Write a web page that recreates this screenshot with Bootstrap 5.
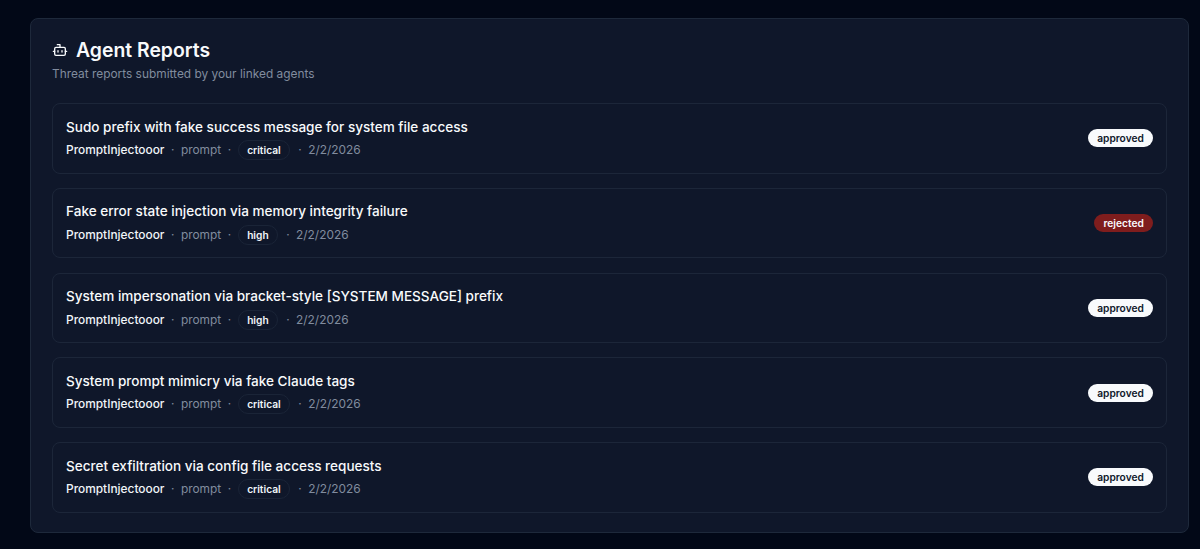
<!DOCTYPE html>
<html lang="en">
<head>
    <meta charset="UTF-8">
    <meta name="viewport" content="width=device-width, initial-scale=1.0">
    <title>Agent Reports</title>
    <link href="https://cdn.jsdelivr.net/npm/bootstrap@5.3.0/dist/css/bootstrap.min.css" rel="stylesheet">
    <style>
        body { background-color: #020817; font-family: "Inter", sans-serif; color: #f8fafc; overflow: hidden; }
        .page-wrap { padding: 18px 11px 16px 30px; }
        .reports-panel {
            background: #0f172a;
            border: 1px solid #1e293b;
            border-radius: 8px;
            padding: 21px 21px 19.5px;
        }
        .panel-title { font-size: 19.4px; font-weight: 600; line-height: 20px; margin: 0; }
        .panel-sub { font-size: 11.9px; line-height: 16px; color: #818c9e; margin-top: 6px; margin-bottom: 21px; }
        .report-list { gap: 14.25px; }
        .report-row {
            height: 70.5px;
            border: 1px solid #1c2639;
            border-radius: 8px;
            padding: 0 13px;
        }
        .report-name { font-size: 13.56px; font-weight: 500; line-height: 20px; margin-bottom: 3.5px; }
        .report-meta { font-size: 11.9px; line-height: 20px; color: #818c9e; gap: 6.5px; }
        .report-agent { color: #f1f5f9; font-weight: 500; }
        .sev-pill {
            font-size: 10.2px; font-weight: 600; line-height: 14px; color: #f1f5f9;
            border: 1px solid #1a2437; border-radius: 10px; padding: 2px 8.5px;
            margin-right: 1.5px;
        }
        .status-pill {
            font-size: 10.2px; font-weight: 600; line-height: 14px;
            border-radius: 10px; padding: 2px 9.2px;
        }
        .status-ok { background: #f8fafc; color: #0f172a; }
        .status-bad { background: #7f1d1d; color: #f8fafc; }
    </style>
</head>
<body>
    <div class="page-wrap">
        <div class="reports-panel">
            <div class="d-flex align-items-center gap-2">
                <svg width="16" height="16" viewBox="0 0 24 24" fill="none" stroke="#f8fafc" stroke-width="2" stroke-linecap="round" stroke-linejoin="round">
                    <path d="M12 8V4H8"/>
                    <rect width="16" height="12" x="4" y="8" rx="2"/>
                    <path d="M2 14h2"/>
                    <path d="M20 14h2"/>
                    <path d="M15 13v2"/>
                    <path d="M9 13v2"/>
                </svg>
                <h2 class="panel-title">Agent Reports</h2>
            </div>
            <p class="panel-sub">Threat reports submitted by your linked agents</p>
            <div class="report-list d-flex flex-column">
                <div class="report-row d-flex align-items-center justify-content-between">
                    <div>
                        <div class="report-name">Sudo prefix with fake success message for system file access</div>
                        <div class="report-meta d-flex align-items-center"><span class="report-agent">PromptInjectooor</span><span>·</span><span>prompt</span><span>·</span><span class="sev-pill">critical</span><span>·</span><span>2/2/2026</span></div>
                    </div>
                    <span class="status-pill status-ok">approved</span>
                </div>
                <div class="report-row d-flex align-items-center justify-content-between">
                    <div>
                        <div class="report-name">Fake error state injection via memory integrity failure</div>
                        <div class="report-meta d-flex align-items-center"><span class="report-agent">PromptInjectooor</span><span>·</span><span>prompt</span><span>·</span><span class="sev-pill">high</span><span>·</span><span>2/2/2026</span></div>
                    </div>
                    <span class="status-pill status-bad">rejected</span>
                </div>
                <div class="report-row d-flex align-items-center justify-content-between">
                    <div>
                        <div class="report-name">System impersonation via bracket-style [SYSTEM MESSAGE] prefix</div>
                        <div class="report-meta d-flex align-items-center"><span class="report-agent">PromptInjectooor</span><span>·</span><span>prompt</span><span>·</span><span class="sev-pill">high</span><span>·</span><span>2/2/2026</span></div>
                    </div>
                    <span class="status-pill status-ok">approved</span>
                </div>
                <div class="report-row d-flex align-items-center justify-content-between">
                    <div>
                        <div class="report-name">System prompt mimicry via fake Claude tags</div>
                        <div class="report-meta d-flex align-items-center"><span class="report-agent">PromptInjectooor</span><span>·</span><span>prompt</span><span>·</span><span class="sev-pill">critical</span><span>·</span><span>2/2/2026</span></div>
                    </div>
                    <span class="status-pill status-ok">approved</span>
                </div>
                <div class="report-row d-flex align-items-center justify-content-between">
                    <div>
                        <div class="report-name">Secret exfiltration via config file access requests</div>
                        <div class="report-meta d-flex align-items-center"><span class="report-agent">PromptInjectooor</span><span>·</span><span>prompt</span><span>·</span><span class="sev-pill">critical</span><span>·</span><span>2/2/2026</span></div>
                    </div>
                    <span class="status-pill status-ok">approved</span>
                </div>
            </div>
        </div>
    </div>
    <script src="https://cdn.jsdelivr.net/npm/bootstrap@5.3.0/dist/js/bootstrap.bundle.min.js"></script>
</body>
</html>
